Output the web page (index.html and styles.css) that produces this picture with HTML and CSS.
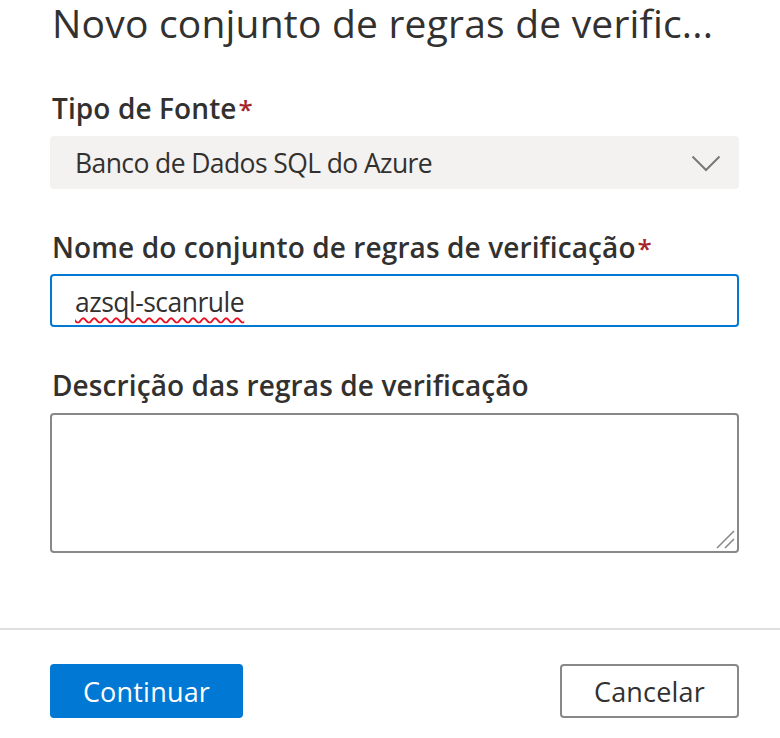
FILE: index.html
```html
<!DOCTYPE html>
<html lang="pt-BR">
<head>
<meta charset="utf-8">
<title>Novo conjunto de regras de verificação</title>
<link rel="stylesheet" href="styles.css">
</head>
<body>
<div class="dialog">
  <div class="content">
    <h1 class="title">Novo conjunto de regras de verific...</h1>

    <div class="field field-first">
      <div class="label">Tipo de Fonte<span class="req">*</span></div>
      <div class="dropdown">
        <span class="dropdown-text">Banco de Dados SQL do Azure</span>
        <svg class="chevron" width="30" height="17" viewBox="0 0 30 17" aria-hidden="true">
          <polyline points="1.5,1.5 15,15 28.5,1.5" fill="none" stroke="#7a7876" stroke-width="2"/>
        </svg>
      </div>
    </div>

    <div class="field">
      <div class="label label-tight">Nome do conjunto de regras de verificação<span class="req">*</span></div>
      <div class="textbox focused"><span class="misspelled">azsql-scanrule</span></div>
    </div>

    <div class="field">
      <div class="label">Descrição das regras de verificação</div>
      <div class="textarea">
        <svg class="grip" width="20" height="20" viewBox="0 0 20 20" aria-hidden="true">
          <line x1="2" y1="19" x2="19" y2="2" stroke="#8a8886" stroke-width="1.6"/>
          <line x1="10" y1="19" x2="19" y2="10" stroke="#8a8886" stroke-width="1.6"/>
        </svg>
      </div>
    </div>
  </div>

  <div class="divider"></div>

  <div class="footer">
    <button class="btn btn-primary">Continuar</button>
    <button class="btn btn-default">Cancelar</button>
  </div>
</div>
</body>
</html>
```

FILE: styles.css
```css
html, body {
  margin: 0;
  padding: 0;
  background: #ffffff;
}

body {
  font-family: "Open Sans", "Noto Sans", "Liberation Sans", sans-serif;
  color: #323130;
  width: 780px;
  height: 738px;
  overflow: hidden;
}

.dialog {
  display: flex;
  flex-direction: column;
}

.content {
  display: flex;
  flex-direction: column;
  padding: 0 41px 0 50px;
}

.title {
  margin: 0;
  font-size: 39px;
  font-weight: 400;
  line-height: 46px;
  height: 46px;
  letter-spacing: 0.2px;
  white-space: nowrap;
  color: #323130;
  padding-left: 2px;
}

.field {
  display: flex;
  flex-direction: column;
  margin-top: 39px;
}

.field-first {
  margin-top: 43px;
}

.label {
  font-size: 28px;
  font-weight: 600;
  line-height: 38px;
  height: 38px;
  letter-spacing: 0.1px;
  padding-left: 2px;
  margin-bottom: 9px;
  white-space: nowrap;
}

.label-tight {
  margin-bottom: 8px;
}

.req {
  color: #a4262c;
  margin-left: 2px;
  font-size: 26px;
}

.dropdown {
  height: 53px;
  background: #f3f2f1;
  border-radius: 4px;
  display: flex;
  align-items: center;
  justify-content: space-between;
  padding: 0 18px 0 25px;
}

.dropdown-text {
  font-size: 26.5px;
  line-height: 53px;
  letter-spacing: -0.6px;
  color: #323130;
  padding-top: 2px;
}

.chevron {
  display: block;
  margin-top: 2px;
}

.textbox {
  height: 53px;
  box-sizing: border-box;
  border: 2px solid #0078d4;
  border-radius: 4px;
  display: flex;
  align-items: center;
  padding: 0 0 0 23px;
  font-size: 26.5px;
  letter-spacing: -0.5px;
  color: #323130;
}

.misspelled {
  text-decoration-line: underline;
  text-decoration-style: wavy;
  text-decoration-color: #e81123;
  text-decoration-thickness: 1.5px;
  text-underline-offset: 5px;
  text-decoration-skip-ink: none;
  padding-top: 2px;
}

.textarea {
  position: relative;
  height: 140px;
  box-sizing: border-box;
  border: 2px solid #8a8886;
  border-radius: 4px;
}

.grip {
  position: absolute;
  right: 2px;
  bottom: 2px;
}

.divider {
  height: 2px;
  background: #e1dfdd;
  margin-top: 75px;
}

.footer {
  display: flex;
  justify-content: space-between;
  padding: 34px 41px 0 50px;
}

.btn {
  height: 54px;
  box-sizing: border-box;
  border-radius: 4px;
  font-family: inherit;
  font-size: 27px;
  letter-spacing: 0.2px;
  line-height: 1;
  padding: 0;
  display: flex;
  align-items: center;
  justify-content: center;
  cursor: pointer;
}

.btn-primary {
  width: 193px;
  background: #0078d4;
  color: #ffffff;
  border: none;
}

.btn-default {
  width: 179px;
  background: #ffffff;
  color: #323130;
  border: 2px solid #8a8886;
}
```
